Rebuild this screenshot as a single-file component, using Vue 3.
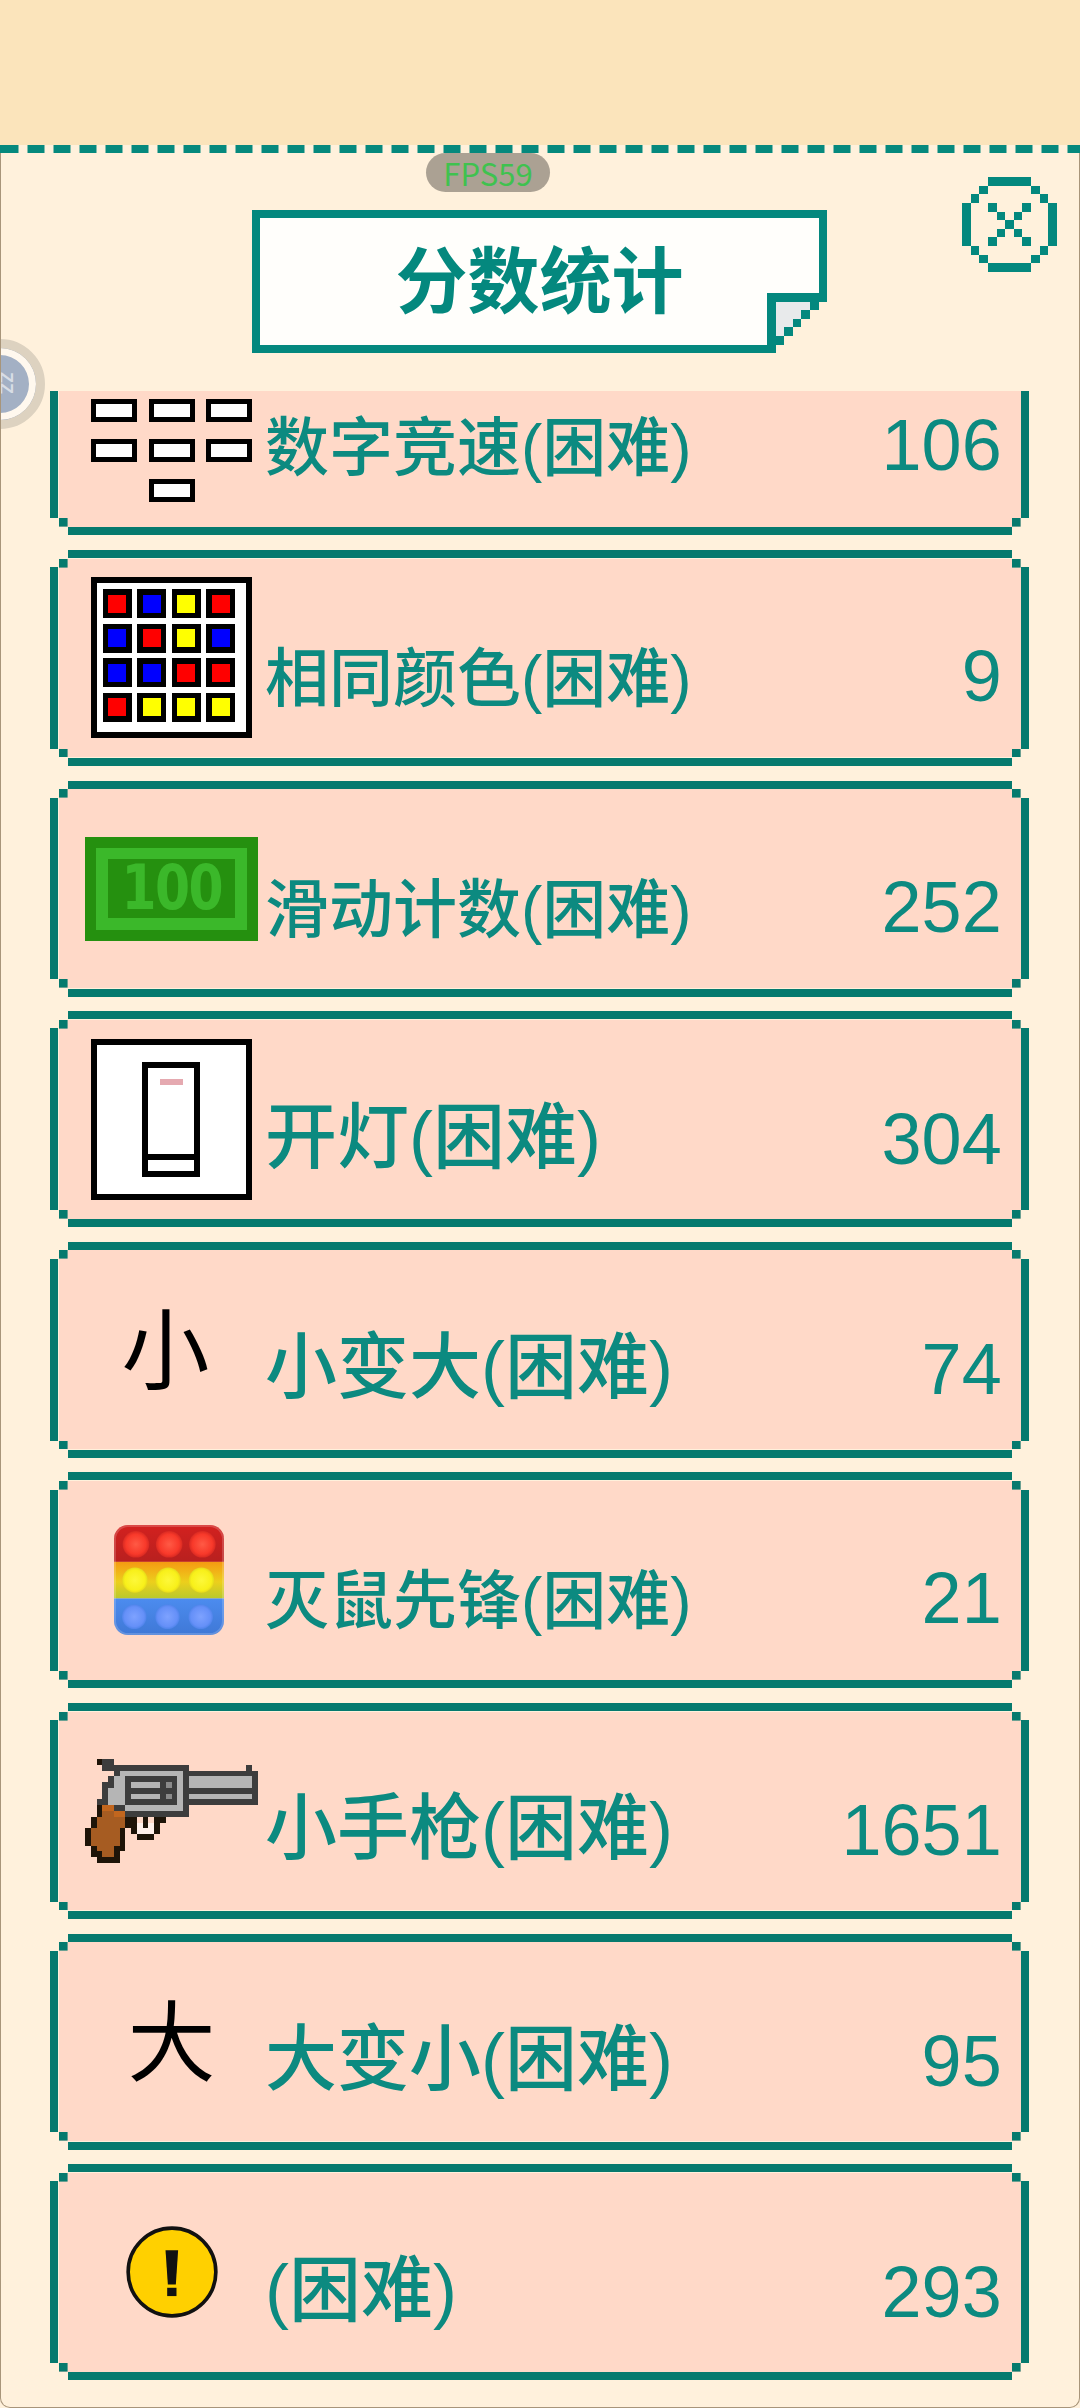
<template>
  <div class="page">
    <div class="top"></div>
    <div class="panel">
      <div class="ball"><span>ZZ</span></div>
      <div class="dash"></div>
      <div class="head">
        <div class="fps">FPS59</div>
        <div class="title">
          分数统计
          <svg class="fold" viewBox="0 0 7 7" shape-rendering="crispEdges">
            <path d="M1 1h6v6H1z" fill="#fff1dc" />
            <path d="M1 1h4v1H4v1H3v1H2v1H1z" fill="#e8eaeb" />
            <path d="M0 0h7v1H0zM0 1h1v6H0zM5 1h1v1H5zM4 2h1v1H4zM3 3h1v1H3zM2 4h1v1H2zM1 5h1v1H1z" fill="#04887e" />
          </svg>
        </div>
        <svg class="close" viewBox="0 0 11 11" shape-rendering="crispEdges" fill="#04887e">
          <path d="M3 0h5v1H3zM2 1h1v1H2zM8 1h1v1H8zM1 2h1v1H1zM9 2h1v1H9zM0 3h1v5H0zM10 3h1v5h-1zM1 8h1v1H1zM9 8h1v1H9zM2 9h1v1H2zM8 9h1v1H8zM3 10h5v1H3z" />
          <path d="M3 3h1v1H3zM7 3h1v1H7zM4 4h1v1H4zM6 4h1v1H6zM5 5h1v1H5zM4 6h1v1H4zM6 6h1v1H6zM3 7h1v1H3zM7 7h1v1H7z" />
        </svg>
      </div>

      <div class="list">
        <div v-for="row in rows" :key="row.icon" class="row">
          <div class="icon">
            <!-- 数字键 -->
            <svg v-if="row.icon === 'keys'" class="sq" viewBox="0 0 161 161" shape-rendering="crispEdges">
              <rect v-for="k in keys" :key="k[0] + '-' + k[1]" :x="k[0] + 2.5" :y="k[1] + 2.5" width="41" height="18" fill="#fff" stroke="#000" stroke-width="5" />
            </svg>

            <svg v-else-if="row.icon === 'color'" class="sq" viewBox="0 0 161 161" shape-rendering="crispEdges">
              <rect x="3" y="3" width="155" height="155" fill="#fff" stroke="#000" stroke-width="6" />
              <g v-for="(c, i) in colors" :key="i">
                <rect :x="11.5 + (i % 4) * 34.5" :y="12 + Math.floor(i / 4) * 34.5" width="29" height="29" fill="#000" />
                <rect :x="17 + (i % 4) * 34.5" :y="17.5 + Math.floor(i / 4) * 34.5" width="18" height="18" :fill="c" />
              </g>
            </svg>

            <div v-else-if="row.icon === 'bill'" class="bill">
              <div class="bill-in"><span>100</span></div>
            </div>

            <svg v-else-if="row.icon === 'switch'" class="sq" viewBox="0 0 161 161" shape-rendering="crispEdges">
              <rect x="3" y="3" width="155" height="155" fill="#fff" stroke="#000" stroke-width="6" />
              <rect x="54" y="26" width="52" height="109" fill="#fff" stroke="#000" stroke-width="6" />
              <rect x="51" y="115" width="58" height="6" fill="#000" />
              <rect x="69" y="40" width="23" height="6" fill="#e5a9b0" />
            </svg>

            <span v-else-if="row.icon === 'small'" class="glyph small">小</span>

            <svg v-else-if="row.icon === 'pop'" class="pop" viewBox="222 917 331 331">
              <defs>
                <linearGradient id="popY" x1="0" y1="0" x2="0" y2="1">
                  <stop offset="0" stop-color="#f59a12" />
                  <stop offset="0.55" stop-color="#eccf1c" />
                  <stop offset="1" stop-color="#b9c92c" />
                </linearGradient>
                <linearGradient id="popR" x1="0" y1="0" x2="0" y2="1">
                  <stop offset="0" stop-color="#d3211f" />
                  <stop offset="1" stop-color="#b8201f" />
                </linearGradient>
                <linearGradient id="popB" x1="0" y1="0" x2="0" y2="1">
                  <stop offset="0" stop-color="#4c8cef" />
                  <stop offset="1" stop-color="#3f78d6" />
                </linearGradient>
                <radialGradient id="dotR">
                  <stop offset="0" stop-color="#ff5a45" />
                  <stop offset="0.75" stop-color="#f8392a" />
                  <stop offset="1" stop-color="#d92a22" />
                </radialGradient>
                <radialGradient id="dotY">
                  <stop offset="0" stop-color="#fdf83a" />
                  <stop offset="0.8" stop-color="#f8f01a" />
                  <stop offset="1" stop-color="#e6d91c" />
                </radialGradient>
                <radialGradient id="dotB">
                  <stop offset="0" stop-color="#7ea2ff" />
                  <stop offset="0.8" stop-color="#6590f8" />
                  <stop offset="1" stop-color="#4f84ea" />
                </radialGradient>
                <clipPath id="popClip"><rect x="222" y="917" width="331" height="331" rx="42" /></clipPath>
              </defs>
              <g clip-path="url(#popClip)">
                <rect x="222" y="917" width="331" height="111" fill="url(#popR)" />
                <rect x="222" y="1028" width="331" height="110" fill="url(#popY)" />
                <rect x="222" y="1138" width="331" height="110" fill="url(#popB)" />
              </g>
              <rect x="225" y="920" width="325" height="325" rx="40" fill="none" stroke="#fff" stroke-opacity="0.18" stroke-width="6" />
              <circle v-for="x in [288, 388, 488]" :key="'r' + x" :cx="x" cy="975" r="40" fill="url(#dotR)" />
              <circle v-for="x in [285, 385, 485]" :key="'y' + x" :cx="x" cy="1083" r="38" fill="url(#dotY)" />
              <circle v-for="x in [283, 383, 483]" :key="'b' + x" :cx="x" cy="1193" r="37" fill="url(#dotB)" />
            </svg>

            <svg v-else-if="row.icon === 'gun'" class="gun" viewBox="0 0 30 18" shape-rendering="crispEdges">
              <rect v-for="(p, i) in gun" :key="i" :x="p[0]" :y="p[1]" :width="p[2]" :height="p[3]" :fill="p[4]" />
            </svg>

            <span v-else-if="row.icon === 'big'" class="glyph big">大</span>

            <svg v-else class="warn" viewBox="256 825 277 275">
              <circle cx="394.5" cy="962.5" r="132" fill="#ffd000" stroke="#111" stroke-width="11" />
              <path d="M375 897h38l-7 103h-24z" fill="#111" />
              <rect x="380" y="1010" width="28" height="25" fill="#111" />
            </svg>
          </div>
          <div class="info">
            <span class="name" :class="{ long: row.name.length > 7 }">{{ row.name }}</span>
            <span class="score">{{ row.score }}</span>
          </div>
        </div>
      </div>
    </div>
  </div>
</template>

<script setup>
const rows = [
  { icon: "keys", name: "数字竞速(困难)", score: 106 },
  { icon: "color", name: "相同颜色(困难)", score: 9 },
  { icon: "bill", name: "滑动计数(困难)", score: 252 },
  { icon: "switch", name: "开灯(困难)", score: 304 },
  { icon: "small", name: "小变大(困难)", score: 74 },
  { icon: "pop", name: "灭鼠先锋(困难)", score: 21 },
  { icon: "gun", name: "小手枪(困难)", score: 1651 },
  { icon: "big", name: "大变小(困难)", score: 95 },
  { icon: "warn", name: "(困难)", score: 293 },
];

// 数字键盘 1-9 和 0
const keys = [];
for (let r = 0; r < 3; r++) {
  for (let c = 0; c < 3; c++) keys.push([c * 57.5, 12 + r * 40]);
}
keys.push([57.5, 132]);

const R = "#f00";
const B = "#00f";
const Y = "#ff0";
const colors = [R, B, Y, R, B, R, Y, B, B, B, R, R, R, Y, Y, Y];

// 手枪像素图 [x, y, w, h, color]
const D = "#3d3d3d";
const L = "#b5b5b5";
const M = "#8a8a8a";
const K = "#1e1408";
const W = "#a65c22";
const O = "#c2661e";
const gun = [
  [2, 0, 1, 1, K], [3, 0, 2, 1, D], [3, 1, 15, 1, D], [28, 1, 1, 1, D],
  [5, 2, 1, 1, D], [6, 2, 11, 1, L], [17, 2, 13, 1, D],
  [4, 3, 1, 2, D], [3, 4, 1, 3, D], [2, 7, 2, 1, D],
  [5, 3, 2, 1, L], [4, 5, 3, 3, L], [5, 4, 2, 1, L],
  [7, 3, 9, 5, D], [16, 3, 1, 6, L], [17, 3, 1, 6, D],
  [8, 4, 5, 1, L], [8, 6, 5, 1, L], [14, 4, 1, 1, M], [14, 6, 1, 1, M],
  [18, 3, 11, 2, L], [18, 5, 11, 1, D], [18, 6, 11, 1, L], [18, 7, 12, 1, D],
  [29, 3, 1, 4, D],
  [2, 8, 1, 2, K], [3, 8, 2, 1, O], [5, 8, 2, 1, D], [7, 8, 9, 1, L],
  [3, 9, 4, 1, W], [5, 9, 2, 1, O], [7, 9, 11, 1, D],
  [1, 10, 1, 2, K], [2, 10, 5, 2, W], [7, 10, 2, 2, K], [10, 10, 1, 2, K], [12, 10, 2, 1, K], [12, 11, 1, 1, K],
  [8, 12, 1, 1, K], [12, 12, 1, 1, K], [9, 11, 1, 2, "#fff0ea"], [11, 11, 1, 2, "#fff0ea"], [10, 12, 1, 1, "#fff0ea"], [9, 13, 3, 1, K],
  [0, 12, 1, 3, K], [1, 12, 5, 3, W], [6, 12, 1, 3, K],
  [1, 15, 1, 1, K], [2, 15, 3, 1, W], [5, 15, 2, 1, K],
  [1, 16, 2, 1, K], [3, 16, 2, 1, W], [5, 16, 1, 1, K], [2, 17, 4, 1, K],
];
</script>

<style>
html,
body {
  margin: 0;
  background: #fff1dc;
}
</style>

<style scoped>
.page {
  width: 1080px;
  height: 2408px;
  display: flex;
  flex-direction: column;
  overflow: hidden;
  font-family: "Liberation Sans", "Noto Sans CJK SC", sans-serif;
}

.top {
  height: 144.5px;
  flex: none;
  background: #fbe4bb;
}

.panel {
  flex: 1;
  min-height: 0;
  position: relative;
  display: flex;
  flex-direction: column;
  background: #fff1dc;
  border-radius: 0 0 10px 10px;
}

.panel::after {
  content: "";
  position: absolute;
  inset: 0;
  border: 1.5px solid #a8957a;
  border-top: none;
  border-radius: 0 0 10px 10px;
  pointer-events: none;
}

.dash {
  height: 8.3px;
  flex: none;
  background: repeating-linear-gradient(90deg, #06897d 0 17.4px, transparent 17.4px 26px) 1.5px 0 repeat-x;
  position: relative;
  z-index: 1;
}

.ball {
  position: absolute;
  left: -45px;
  top: 194.5px;
  width: 90px;
  height: 90px;
  border-radius: 50%;
  box-sizing: border-box;
  background: #a3b0c4;
  border: 9px solid #ddd2c0;
  box-shadow: inset 0 0 0 7px #fff8ee;
}

.ball span {
  position: absolute;
  left: 31px;
  top: 25px;
  font-size: 18px;
  line-height: 20px;
  color: #d8dde5;
  transform: rotate(90deg);
  font-weight: 700;
}

.head {
  position: relative;
  flex: none;
  height: 238.2px;
  box-sizing: border-box;
  padding-top: 57.2px;
}

.fps {
  position: absolute;
  left: 426px;
  top: 0;
  width: 124px;
  height: 39px;
  border-radius: 20px;
  background: #aba193;
  color: #3fc24f;
  font-family: "Noto Sans CJK SC", sans-serif;
  font-size: 31px;
  line-height: 39px;
  text-align: center;
}

.title {
  position: relative;
  width: 575px;
  height: 143px;
  box-sizing: border-box;
  margin-left: 252px;
  padding-bottom: 12px;
  border: 8.3px solid #04887e;
  background: #fffefb;
  display: flex;
  align-items: center;
  justify-content: center;
  color: #04887e;
  font-family: "Noto Sans CJK SC", sans-serif;
  font-size: 72px;
  font-weight: 700;
}

.fold {
  position: absolute;
  right: -8.3px;
  bottom: -8.3px;
  width: 60.2px;
  height: 60.2px;
}

.close {
  position: absolute;
  left: 962px;
  top: 24.5px;
  width: 95px;
  height: 95px;
}

.list {
  flex: 1;
  min-height: 0;
  overflow: hidden;
}

.row {
  position: relative;
  height: 198.8px;
  margin: 31.8px 59.3px 0 59px;
  display: flex;
  align-items: center;
  padding: 0 19px 0 26px;
  box-sizing: border-box;
  background:
    linear-gradient(#067a6e, #067a6e) 0 0 / 8.6px 8.6px no-repeat,
    linear-gradient(#067a6e, #067a6e) 100% 0 / 8.6px 8.6px no-repeat,
    linear-gradient(#067a6e, #067a6e) 0 100% / 8.6px 8.6px no-repeat,
    linear-gradient(#067a6e, #067a6e) 100% 100% / 8.6px 8.6px no-repeat,
    #ffd9c8;
}

.row:first-child {
  margin-top: -63px;
}

.row::before {
  content: "";
  position: absolute;
  left: 8.6px;
  right: 8.6px;
  top: -8.6px;
  bottom: -8.6px;
  border-top: 8.6px solid #067a6e;
  border-bottom: 8.6px solid #067a6e;
}

.row::after {
  content: "";
  position: absolute;
  left: -8.6px;
  right: -8.6px;
  top: 8.6px;
  bottom: 8.6px;
  border-left: 8.6px solid #067a6e;
  border-right: 8.6px solid #067a6e;
}

.icon {
  position: relative;
  z-index: 1;
  flex: none;
  width: 173px;
  display: flex;
  align-items: center;
  justify-content: center;
}

.sq {
  width: 161px;
  height: 161px;
  display: block;
}

.bill {
  width: 173px;
  height: 104px;
  box-sizing: border-box;
  border: 11.6px solid #25900f;
  background: #3bb82a;
  padding: 11.6px;
}

.bill-in {
  height: 100%;
  background: #25900f;
  text-align: center;
  color: #3bb82a;
  font-family: "DejaVu Sans", sans-serif;
  font-weight: 700;
  font-size: 63px;
  line-height: 57px;
  letter-spacing: -2px;
}

.bill-in span {
  display: inline-block;
  transform: scaleX(0.8);
}

.glyph {
  color: #000;
  font-family: "Noto Sans CJK SC", sans-serif;
  font-size: 88px;
  line-height: 100px;
}

.small {
  transform: translate(-6px, -6px);
}

.big {
  transform: translate(0, -6px);
}

.pop {
  width: 110px;
  height: 110px;
  display: block;
  transform: translateX(-3px);
}

.gun {
  width: 173px;
  height: 104px;
  display: block;
}

.warn {
  width: 92px;
  height: 92px;
  display: block;
}

.info {
  position: relative;
  z-index: 1;
  flex: 1;
  min-width: 0;
  display: flex;
  align-items: baseline;
  justify-content: space-between;
  padding: 39px 0 0 7px;
  color: #0c8a80;
}

.name {
  font-size: 72px;
  font-weight: 500;
  line-height: 80px;
  transform: translateY(-2px);
}

.name.long {
  font-size: 64px;
  transform: none;
}

.score {
  font-size: 72px;
  line-height: 80px;
}
</style>
